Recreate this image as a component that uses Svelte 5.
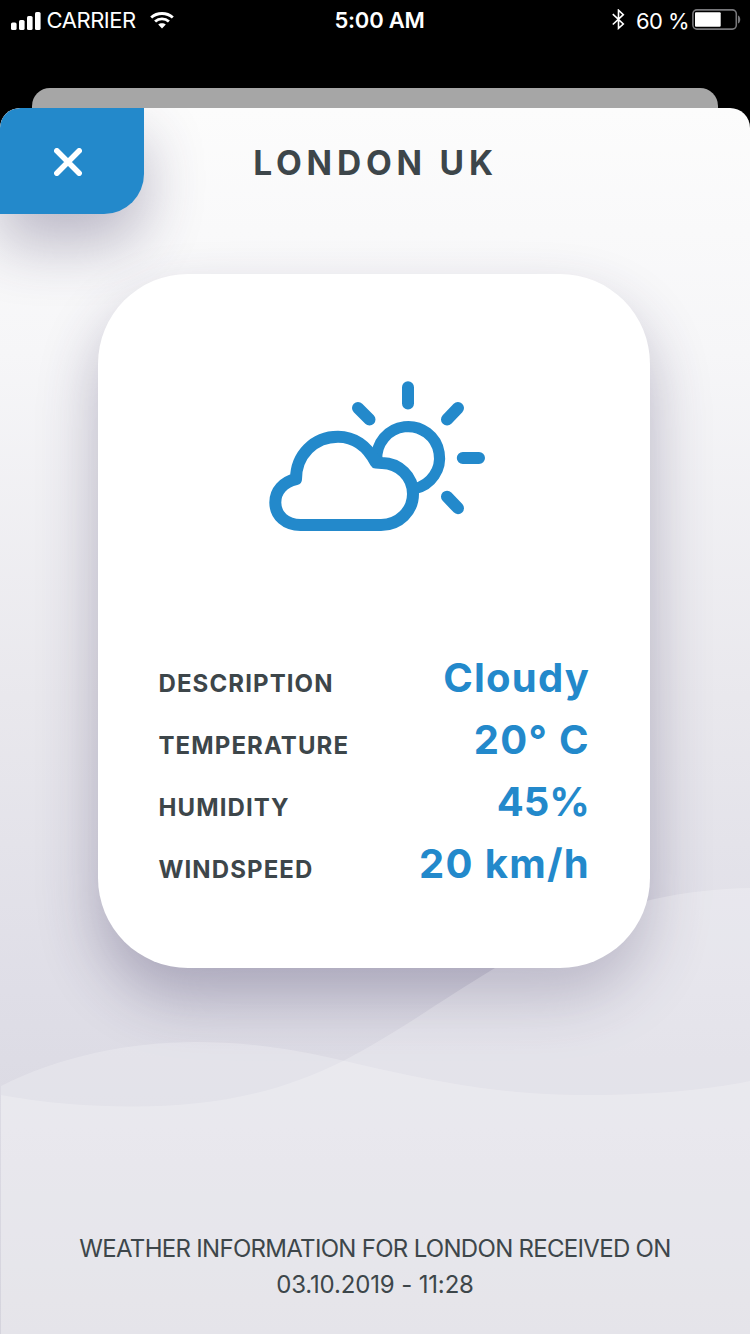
<script>
  const title = 'LONDON UK';
  const rows = [
    { label: 'DESCRIPTION', value: 'Cloudy', tracking: 1.2 },
    { label: 'TEMPERATURE', value: '20° C', tracking: 1.35 },
    { label: 'HUMIDITY', value: '45%', tracking: 0 },
    { label: 'WINDSPEED', value: '20 km/h', tracking: 1.3 }
  ];
</script>

<div class="screen">
  <div class="status">
    <div class="side">
      <svg class="signal" width="30" height="18" viewBox="0 0 30 18" fill="#fff">
        <rect x="0" y="10.5" width="5.6" height="7.5" rx="1.6" />
        <rect x="8" y="8" width="5.6" height="10" rx="1.6" />
        <rect x="16" y="4" width="5.6" height="14" rx="1.6" />
        <rect x="24" y="0" width="5.6" height="18" rx="1.6" />
      </svg>
      <span class="carrier">CARRIER</span>
      <svg class="wifi" width="24" height="17" viewBox="0 0 24 17" fill="none" stroke="#fff" stroke-width="2.9">
        <path d="M1.2 5.5C7.2 .1 16.800 .1 22.800 5.500" />
        <path d="M5.100 9.500C9 6 15 6 18.900 9.500" />
        <path d="M12 16.400L8.200 12.600C10.200 10.800 13.800 10.800 15.800 12.600Z" fill="#fff" stroke="none" />
      </svg>
    </div>
    <span class="time">5:00 AM</span>
    <div class="side end">
      <svg class="bt" width="13" height="21" viewBox="0 0 13 21" fill="none" stroke="#fff" stroke-width="1.6">
        <path d="M.8 5.200L11.300 15L6.500 19.300V1.200L11.300 5.700L.8 15.500" />
      </svg>
      <span class="pct">60 %</span>
      <svg class="battery" width="49" height="21" viewBox="0 0 49 21">
        <rect x=".9" y=".9" width="43.400" height="19.200" rx="4" fill="none" stroke="#77777a" stroke-width="1.600" />
        <rect x="3" y="3.300" width="25.700" height="14.400" rx="1" fill="#fff" />
        <path d="M46 6.500C49 7.500 49 13.500 46 14.500Z" fill="#77777a" />
      </svg>
    </div>
  </div>

  <div class="behind"></div>

  <main class="sheet">
    <header>
      <button class="close" aria-label="Close">
        <svg width="28" height="28" viewBox="0 0 28 28" stroke="#fff" stroke-width="5.500" stroke-linecap="round">
          <path d="M2.800 2.800L25.200 25.200M25.200 2.800L2.800 25.200" />
        </svg>
      </button>
      <h1>{title}</h1>
    </header>

    <section class="card">
      <svg class="weather" width="220" height="154" viewBox="267 379 220 154" fill="none" stroke="#2389cb" stroke-linecap="round" stroke-linejoin="round">
        <path stroke-width="11.200" stroke-linecap="butt" d="M376.800 460A31.400 31.400 0 1 1 415 488.600" />
        <path stroke-width="12" d="M296 479.200C283.500 482 275.300 491 275.300 502.500C275.300 516 286 525 300.500 525H381C399 525 413 511 413 494C413 476.500 399 463.200 382 463L375.800 462.500C367 445.500 353.500 436.700 338 436.700C314 436.700 296 455 296 479.200Z" />
        <path stroke-width="12" d="M408 387.200V403.500M462.800 458H479M447 419.500L458 408M358 408L369.500 419.500M447 496.700L458 508.200" />
      </svg>
      <dl>
        {#each rows as row}
          <div class="row">
            <dt>{row.label}</dt>
            <dd style="letter-spacing: {row.tracking}px">{row.value}</dd>
          </div>
        {/each}
      </dl>
    </section>

    <svg class="waves" viewBox="0 880 750 454" fill="#fff" fill-opacity=".22">
      <path d="M1 1086C60 1056 130 1042 195 1042C245 1042 290 1048 345 1061C435 1082 500 1095 590 1095C650 1095 705 1090 750 1081V1334H1Z" />
      <path d="M1 1095C45 1103 90 1106.500 132 1106.500C210 1106.500 275 1095 345 1060C400 1031 440 1001 495 968C550 935 600 912 650 900C685 892 718 888.500 750 888V1334H1Z" />
    </svg>

    <footer>
      <span class="info">WEATHER INFORMATION FOR LONDON RECEIVED ON</span>
      <span class="date">03.10.2019 - 11:28</span>
    </footer>
  </main>
</div>

<style>
  :global(body) {
    margin: 0;
    background: #000;
  }
  .screen {
    width: 750px;
    height: 1334px;
    overflow: hidden;
    display: flex;
    flex-direction: column;
    background: #000;
    font-family: Inter, 'Liberation Sans', sans-serif;
    color: #3d464a;
  }
  .status {
    height: 40px;
    margin-bottom: 48px;
    padding: 0 9px 0 11px;
    display: grid;
    grid-template-columns: 1fr auto 1fr;
    align-items: center;
    color: #fff;
    font-size: 22px;
    line-height: 40px;
    white-space: nowrap;
  }
  .side {
    height: 40px;
    display: flex;
    align-items: center;
  }
  .end {
    justify-content: flex-end;
  }
  .signal {
    margin-top: 1px;
  }
  .carrier {
    margin-left: 5.5px;
    letter-spacing: -0.45px;
  }
  .wifi {
    margin: 1px 0 0 14px;
  }
  .time {
    font-weight: 580;
    margin-left: 7px;
    letter-spacing: -0.25px;
  }
  .bt,
  .battery {
    margin-top: -1px;
  }
  .pct {
    margin: 2px 3px 0 11.5px;
    line-height: 30px;
    letter-spacing: -0.6px;
  }
  .behind {
    height: 20px;
    flex: none;
    margin: 0 32px;
    background: #a6a6a6;
    border-radius: 18px 18px 0 0;
  }
  .sheet {
    position: relative;
    flex: 1;
    display: flex;
    flex-direction: column;
    align-items: center;
    overflow: hidden;
    border-radius: 20px 20px 0 0;
    background: linear-gradient(#fcfcfc 0%, #f6f6f8 20%, #e9e8ed 48%, #dfdee7 72%, #dad9e2 86%, #d5d4dd 100%);
  }
  header {
    width: 100%;
    height: 106px;
    display: grid;
    grid-template-columns: 144px 1fr 144px;
    align-items: center;
  }
  .close {
    width: 144px;
    height: 106px;
    padding: 2px 8px 0 0;
    border: 0;
    display: flex;
    align-items: center;
    justify-content: center;
    background: #2389cb;
    border-radius: 20px 0 40px 0;
    box-shadow: 0 30px 60px rgba(55, 48, 90, 0.32);
  }
  h1 {
    margin: 3px 0 0 1px;
    text-align: center;
    font-size: 33.5px;
    line-height: 40px;
    font-weight: 680;
    letter-spacing: 4.8px;
  }
  .card {
    box-sizing: border-box;
    width: 552px;
    height: 694px;
    margin: 60px 2px 0 0;
    padding: 105px 60px 0;
    display: flex;
    flex-direction: column;
    background: #fff;
    border-radius: 90px;
    box-shadow: 0 30px 60px rgba(55, 48, 90, 0.32);
  }
  .weather {
    display: block;
    margin-left: 109px;
  }
  dl {
    margin: 114px 0 0;
  }
  .row {
    height: 62px;
    display: flex;
    justify-content: space-between;
    align-items: baseline;
    line-height: 62px;
    white-space: nowrap;
  }
  dt {
    margin-left: 0.5px;
    font-size: 24px;
    font-weight: 650;
    letter-spacing: 1.1px;
  }
  dd {
    margin: 0;
    font-size: 40px;
    font-weight: 680;
    color: #2389cb;
  }
  .waves {
    position: absolute;
    left: 0;
    bottom: 0;
    width: 750px;
    height: 454px;
    pointer-events: none;
  }
  footer {
    position: relative;
    margin-top: auto;
    padding-bottom: 31px;
    display: flex;
    flex-direction: column;
    align-items: center;
    font-size: 24px;
    line-height: 36px;
    white-space: nowrap;
  }
  .info {
    letter-spacing: -0.7px;
  }
  .date {
    letter-spacing: -0.15px;
  }
</style>
